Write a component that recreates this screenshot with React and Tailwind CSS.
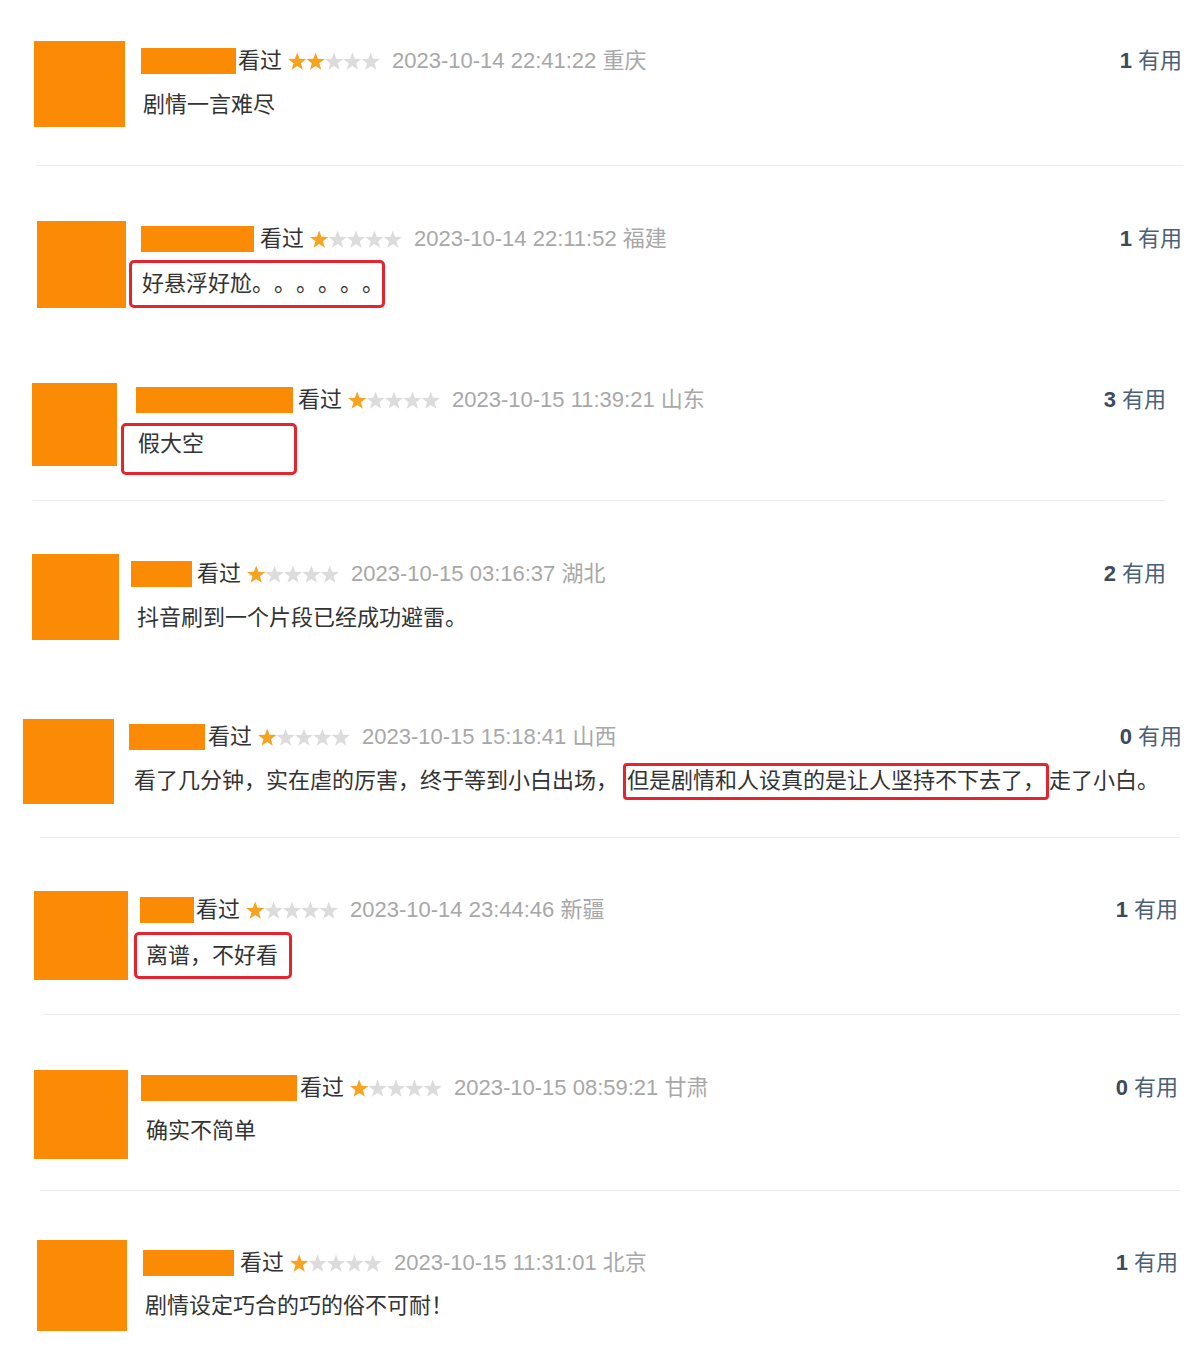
import React from 'react';

const STAR = 'M9.2 0.4L11.49 6.84L18.33 7.03L12.91 11.21L14.84 17.77L9.2 13.9L3.56 17.77L5.49 11.21L0.07 7.03L6.91 6.84Z';

const Stars = ({ filled }) => (
  <svg width="92" height="18" viewBox="0 0 92 18" className="shrink-0">
    {[0, 1, 2, 3, 4].map((i) => (
      <path key={i} d={STAR} transform={`translate(${i * 18.4} 0)`} fill={i < filled ? '#f5a320' : '#dcdcdc'} />
    ))}
  </svg>
);

const rows = [
  {
    section: 'h-[165px] pt-[41px]',
    avatar: 'ml-[34px] w-[91px] h-[86px]',
    col: 'ml-[16px] mt-[6px]',
    name: 'w-[95px]',
    seen: 'ml-[2px]',
    stars: 2,
    date: '2023-10-14 22:41:22 重庆',
    useful: 1,
    usefulMr: 'mr-[18px]',
    text: '剧情一言难尽',
    textCls: 'ml-[2px] mt-[16px]',
    divider: 'ml-[36px] mr-[17px]',
  },
  {
    section: 'h-[174px] pt-[55px]',
    avatar: 'ml-[37px] w-[89px] h-[87px]',
    col: 'ml-[15px] mt-[4px]',
    name: 'w-[113px]',
    seen: 'ml-[6px]',
    stars: 1,
    date: '2023-10-14 22:11:52 福建',
    useful: 1,
    usefulMr: 'mr-[18px]',
    text: '好悬浮好尬。。。。。。',
    boxCls: 'ml-[-12px] mt-[7px] w-[256px] h-[48px] pl-[10px] items-center',
  },
  {
    section: 'h-[160px] pt-[43px]',
    avatar: 'ml-[32px] w-[85px] h-[83px]',
    col: 'ml-[19px] mt-[3px]',
    name: 'w-[157px]',
    seen: 'ml-[5px]',
    stars: 1,
    date: '2023-10-15 11:39:21 山东',
    useful: 3,
    usefulMr: 'mr-[34px]',
    text: '假大空',
    boxCls: 'ml-[-15px] mt-[9px] w-[176px] h-[52px] pl-[14px] pt-[4px] items-start',
    divider: 'ml-[33px] mr-[34px]',
  },
  {
    section: 'h-[179px] pt-[53px]',
    avatar: 'ml-[32px] w-[87px] h-[86px]',
    col: 'ml-[12px] mt-[6px]',
    name: 'w-[61px]',
    seen: 'ml-[5px]',
    stars: 1,
    date: '2023-10-15 03:16:37 湖北',
    useful: 2,
    usefulMr: 'mr-[34px]',
    text: '抖音刷到一个片段已经成功避雷。',
    textCls: 'ml-[6px] mt-[16px]',
  },
  {
    section: 'h-[157px] pt-[39px]',
    avatar: 'ml-[23px] w-[91px] h-[85px]',
    col: 'ml-[15px] mt-[4px]',
    name: 'w-[76px]',
    seen: 'ml-[3px]',
    stars: 1,
    date: '2023-10-15 15:18:41 山西',
    useful: 0,
    usefulMr: 'mr-[18px]',
    long: true,
    divider: 'ml-[40px] mr-[20px]',
  },
  {
    section: 'h-[176px] pt-[53px]',
    avatar: 'ml-[34px] w-[94px] h-[89px]',
    col: 'ml-[12px] mt-[5px]',
    name: 'w-[54px]',
    seen: 'ml-[2px]',
    stars: 1,
    date: '2023-10-14 23:44:46 新疆',
    useful: 1,
    usefulMr: 'mr-[22px]',
    text: '离谱，不好看',
    boxCls: 'ml-[-6px] mt-[8px] w-[158px] h-[47px] pl-[9px] items-center',
    divider: 'ml-[42px] mr-[20px]',
  },
  {
    section: 'h-[175px] pt-[55px]',
    avatar: 'ml-[34px] w-[94px] h-[89px]',
    col: 'ml-[13px] mt-[4px]',
    name: 'w-[156px]',
    seen: 'ml-[3px]',
    stars: 1,
    date: '2023-10-15 08:59:21 甘肃',
    useful: 0,
    usefulMr: 'mr-[22px]',
    text: '确实不简单',
    textCls: 'ml-[5px] mt-[15px]',
    divider: 'ml-[40px] mr-[20px]',
  },
  {
    section: 'h-[172px] pt-[49px]',
    avatar: 'ml-[37px] w-[90px] h-[91px]',
    col: 'ml-[16px] mt-[9px]',
    name: 'w-[91px]',
    seen: 'ml-[6px]',
    stars: 1,
    date: '2023-10-15 11:31:01 北京',
    useful: 1,
    usefulMr: 'mr-[22px]',
    text: '剧情设定巧合的巧的俗不可耐！',
    textCls: 'ml-[2px] mt-[15px]',
  },
];

const Comment = ({ r }) => (
  <div className={`${r.section} flex items-start`}>
    <div className={`${r.avatar} shrink-0 bg-[#fb8a05]`} />
    <div className={`${r.col} flex-1 min-w-0`}>
      {/* meta line */}
      <div className="flex items-center h-[28px] whitespace-nowrap">
        <div className={`${r.name} h-[26px] bg-[#fb8a05] shrink-0`} />
        <span className={`${r.seen} text-[#333]`}>看过</span>
        <span className="ml-[6px] flex items-center">
          <Stars filled={r.stars} />
        </span>
        <span className="ml-[12px] text-[#a8a8a8]">{r.date}</span>
        <span className={`ml-auto ${r.usefulMr} text-[#4a6078]`}>
          <span className="font-bold text-[#3c4a5c]">{r.useful}</span> 有用
        </span>
      </div>

      {/* comment body */}
      {r.long ? (
        <div className="ml-[5px] mt-[16px] h-[28px] flex items-center whitespace-nowrap text-[#333]">
          <span>看了几分钟，实在虐的厉害，终于等到小白出场，</span>
          <span className="ml-[5px] inline-flex items-center h-[37px] border-[3px] border-[#e4252d] rounded-[4px] px-px">
            但是剧情和人设真的是让人坚持不下去了，
          </span>
          <span>走了小白。</span>
        </div>
      ) : r.boxCls ? (
        <div className={`${r.boxCls} flex border-[3px] border-[#e4252d] rounded-[5px] text-[#333] whitespace-nowrap`}>
          <span className="leading-[28px]">{r.text}</span>
        </div>
      ) : (
        <div className={`${r.textCls} h-[28px] leading-[28px] text-[#333] whitespace-nowrap`}>{r.text}</div>
      )}
    </div>
  </div>
);

export default function App() {
  return (
    <div
      className="w-[1200px] h-[1363px] bg-white overflow-hidden text-[22px] leading-[28px] [text-spacing-trim:space-all]"
      style={{ fontFamily: '"Liberation Sans", "Noto Sans CJK SC", sans-serif' }}
    >
      {rows.map((r, i) => (
        <React.Fragment key={i}>
          <Comment r={r} />
          {r.divider && <div className={`${r.divider} h-px bg-[#ececec]`} />}
        </React.Fragment>
      ))}
    </div>
  );
}
